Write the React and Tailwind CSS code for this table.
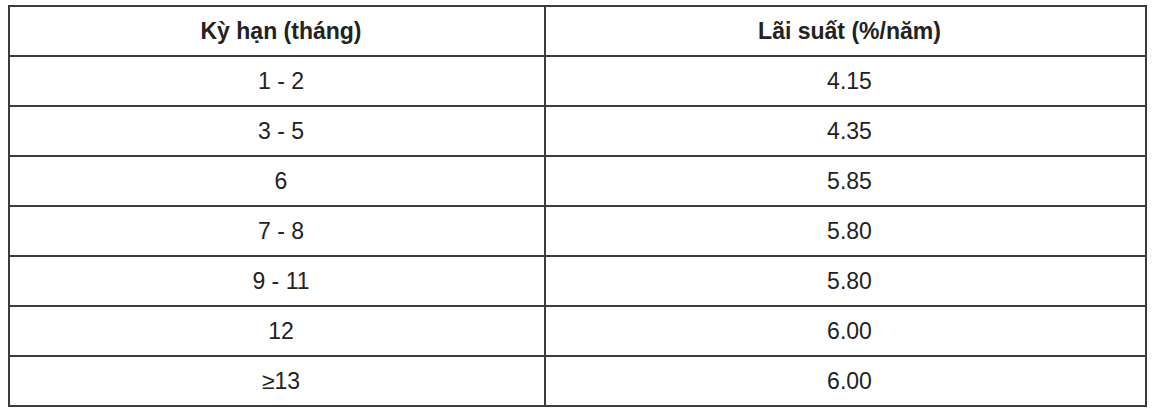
const rows = [
  ["1 - 2", "4.15"],
  ["3 - 5", "4.35"],
  ["6", "5.85"],
  ["7 - 8", "5.80"],
  ["9 - 11", "5.80"],
  ["12", "6.00"],
  ["≥13", "6.00"],
];

export default function App() {
  return (
    <div className="bg-white w-[1156px] h-[416px] pt-[5px] pl-[8px] font-['Liberation_Sans',Arial,sans-serif] text-[#222]">
      <table className="w-[1139px] border-collapse border-2 border-[#3c3c3c] text-[23px]">
        <thead>
          <tr>
            <th className="w-[536px] h-[50px] border-2 border-[#3c3c3c] font-bold text-center pl-2">Kỳ hạn (tháng)</th>
            <th className="h-[50px] border-2 border-[#3c3c3c] font-bold text-center pl-2">Lãi suất (%/năm)</th>
          </tr>
        </thead>
        <tbody>
          {rows.map(([term, rate]) => (
            <tr key={term}>
              <td className="h-[50px] border-2 border-[#3c3c3c] text-center pl-2">{term}</td>
              <td className="h-[50px] border-2 border-[#3c3c3c] text-center pl-2">{rate}</td>
            </tr>
          ))}
        </tbody>
      </table>
    </div>
  );
}
